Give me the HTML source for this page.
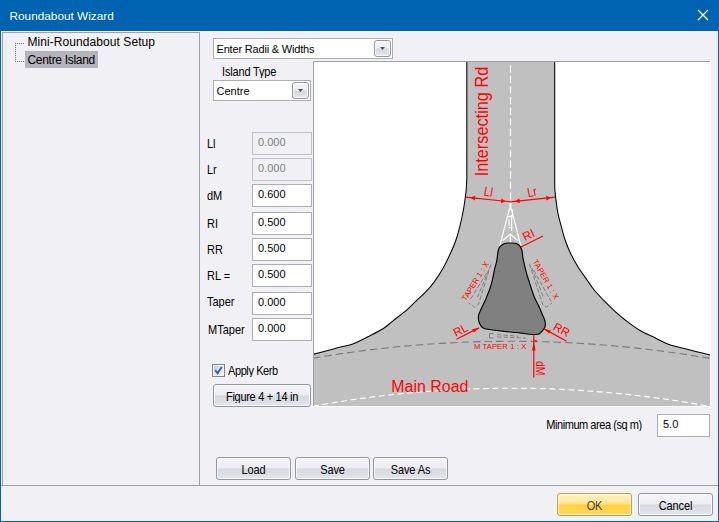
<!DOCTYPE html>
<html><head><meta charset="utf-8">
<style>
html,body{margin:0;padding:0;}
body{width:719px;height:522px;overflow:hidden;background:#f0f0f5;font-family:"Liberation Sans",sans-serif;font-size:11px;color:#000;position:relative;}
.abs{position:absolute;}
#title{left:0;top:0;width:719px;height:31px;background:#0063b1;}
#title span{position:absolute;left:9.5px;top:9px;font-size:11.8px;color:#fff;white-space:nowrap;}
#bl{left:0;top:31px;width:1px;height:491px;background:#0063b1;}
#br{left:718px;top:31px;width:1px;height:491px;background:#0063b1;}
#bb{left:0;top:521px;width:719px;height:1px;background:#0063b1;}
#tree{left:2px;top:32px;width:196px;height:453px;border:1px solid #a0a0a8;border-bottom:none;}
#sep{left:1px;top:485px;width:717px;height:1px;background:#a0a0a8;}
.t{position:absolute;white-space:nowrap;line-height:1;transform:scaleY(1.08);transform-origin:0 0;}
#tr1,#tr2{transform:none;}
.inp{position:absolute;background:#fff;border:1px solid #abadb3;box-sizing:border-box;}
.inp.dis{background:#f0f0f5;border-color:#c0c0c8;}
.inp span{position:absolute;left:5px;top:4px;font-size:11px;line-height:1;white-space:nowrap;}
.inp.dis span{color:#808080;}
.btn{position:absolute;box-sizing:border-box;border:1px solid #9097a0;border-radius:3px;background:linear-gradient(#f5f5f9 0%,#ececf1 48%,#d5d8df 52%,#e4e6eb 100%);box-shadow:inset 0 0 0 1px rgba(255,255,255,.75);text-align:center;font-size:11px;}
.btn span{position:absolute;left:0;right:0;top:5.6px;line-height:1;letter-spacing:-0.1px;transform:scaleY(1.08);transform-origin:0 0;}
</style></head><body>
<div id="title" class="abs"><span>Roundabout Wizard</span>
<svg class="abs" style="left:697px;top:9px" width="12" height="12"><path d="M1 1 L11 11 M11 1 L1 11" stroke="#fff" stroke-width="1.3" fill="none"/></svg>
</div>
<div id="bl" class="abs"></div><div id="br" class="abs"></div><div id="bb" class="abs"></div>
<div id="tree" class="abs"></div>
<div id="sep" class="abs"></div>

<!-- tree -->
<svg class="abs" style="left:14px;top:40px" width="12" height="24" shape-rendering="crispEdges"><path d="M1 3.5 H10 M1.5 3 V22 M1 21.5 H10" stroke="#707078" stroke-width="1" stroke-dasharray="1 1" fill="none"/></svg>
<div class="abs" style="left:25px;top:51px;width:73px;height:17px;background:#b4b4bc;"></div>
<div class="t" id="tr1" style="left:27.5px;top:36px;font-size:12px;letter-spacing:0.07px;">Mini-Roundabout Setup</div>
<div class="t" id="tr2" style="left:27.5px;top:54px;font-size:12px;letter-spacing:-0.3px;">Centre Island</div>

<!-- combo 1 -->
<div class="inp" style="left:213px;top:38px;width:180px;height:21px;"><span id="c1" style="left:2.5px;top:5px;letter-spacing:-0.18px;">Enter Radii &amp; Widths</span></div>
<div class="btn" style="left:374px;top:40px;width:17px;height:17px;"></div>
<svg class="abs" style="left:380px;top:47px" width="5" height="3"><path d="M0 0 H5 L2.5 3 Z" fill="#505058"/></svg>
<div class="t" id="it" style="left:222px;top:66px;font-size:11px;letter-spacing:-0.17px;">Island Type</div>
<!-- combo 2 -->
<div class="inp" style="left:213px;top:80px;width:98px;height:21px;"><span id="c2" style="left:2.5px;top:5px;">Centre</span></div>
<div class="btn" style="left:292px;top:82px;width:17px;height:17px;"></div>
<svg class="abs" style="left:298px;top:89px" width="5" height="3"><path d="M0 0 H5 L2.5 3 Z" fill="#505058"/></svg>

<!-- labels + inputs -->
<div class="t" style="left:207px;top:138px;">Ll</div>
<div class="t" style="left:207px;top:164px;">Lr</div>
<div class="t" style="left:207px;top:190px;">dM</div>
<div class="t" style="left:207px;top:218px;">RI</div>
<div class="t" style="left:207px;top:244px;">RR</div>
<div class="t" style="left:207px;top:270px;">RL =</div>
<div class="t" style="left:207px;top:296px;">Taper</div>
<div class="t" style="left:208px;top:324px;">MTaper</div>
<div class="inp dis" style="left:252px;top:132px;width:60px;height:23px;"><span>0.000</span></div>
<div class="inp dis" style="left:252px;top:158px;width:60px;height:23px;"><span>0.000</span></div>
<div class="inp" style="left:252px;top:184px;width:60px;height:23px;"><span>0.600</span></div>
<div class="inp" style="left:252px;top:212px;width:60px;height:23px;"><span>0.500</span></div>
<div class="inp" style="left:252px;top:238px;width:60px;height:23px;"><span>0.500</span></div>
<div class="inp" style="left:252px;top:264px;width:60px;height:23px;"><span>0.500</span></div>
<div class="inp" style="left:252px;top:292px;width:60px;height:23px;"><span>0.000</span></div>
<div class="inp" style="left:252px;top:318px;width:60px;height:23px;"><span>0.000</span></div>

<!-- checkbox -->
<div class="abs" style="left:212px;top:364px;width:13px;height:13px;box-sizing:border-box;border:1px solid #848488;background:#f4f4f6;"></div>
<div class="abs" style="left:214px;top:366px;width:9px;height:9px;background:linear-gradient(135deg,#c2cad8,#e6e9ef 60%,#f2f3f6);"></div>
<svg class="abs" style="left:214px;top:366px" width="9" height="9"><path d="M1.2 4.2 L3.6 7.2 L7.8 1" stroke="#3f68a0" stroke-width="2" fill="none"/></svg>
<div class="t" style="left:228px;top:365px;letter-spacing:-0.4px;">Apply Kerb</div>
<div class="btn" style="left:213px;top:384px;width:98px;height:23px;"><span style="letter-spacing:-0.3px">Figure 4 + 14 in</span></div>

<!-- diagram -->
<svg class="abs" id="dia" style="left:313px;top:61px" width="398" height="346" viewBox="313 61 398 346">
<rect x="313" y="61" width="398" height="346" fill="#fff"/>
<path d="M466.8 61.0 L466.8 178.0C466.7 180.0 466.4 186.8 466.2 190.0 C465.9 193.2 465.8 193.9 465.3 197.4 C464.8 200.9 464.1 206.3 463.2 211.0 C462.3 215.7 461.2 220.9 460.0 225.8 C458.8 230.7 457.4 235.9 455.8 240.5 C454.2 245.1 452.6 248.6 450.5 253.2 C448.4 257.8 446.0 263.0 443.2 267.9 C440.4 272.8 436.6 278.6 433.7 282.6 C430.8 286.6 428.4 289.1 425.5 292.1 C422.6 295.1 419.5 297.8 416.3 300.8 C413.1 303.8 410.2 307.0 406.3 310.3 C402.4 313.6 396.9 317.7 393.0 320.8 C389.1 323.9 387.2 326.1 383.0 328.7 C378.8 331.3 372.4 334.4 368.0 336.7 C363.6 339.0 359.4 341.1 356.3 342.5 C353.2 343.9 352.5 344.2 349.7 345.0 C346.9 345.8 343.0 346.4 339.7 347.2 C336.4 348.0 334.1 348.8 329.7 350.0 C325.2 351.2 315.8 353.7 313.0 354.4 L313 407 L711 407 L711.0 355.2C708.6 354.6 701.3 352.8 696.7 351.7 C692.1 350.6 688.0 349.6 683.3 348.3 C678.6 347.1 673.0 345.9 668.3 344.2 C663.6 342.4 659.7 340.1 655.0 337.8 C650.3 335.5 644.9 333.4 640.0 330.5 C635.1 327.6 630.0 323.7 625.8 320.5 C621.6 317.3 618.5 314.4 615.0 311.3 C611.5 308.2 608.5 305.2 605.0 301.7 C601.5 298.1 597.1 293.5 594.2 290.0 C591.3 286.5 590.1 284.4 587.4 280.5 C584.7 276.6 580.7 271.4 577.9 266.8 C575.1 262.2 572.6 257.6 570.5 253.2 C568.4 248.8 566.9 245.1 565.3 240.5 C563.7 235.9 562.3 230.4 561.1 225.8 C559.9 221.2 558.8 217.8 557.9 213.2 C557.0 208.6 556.3 202.3 555.8 198.4 C555.3 194.5 555.1 193.1 554.9 190.0 C554.7 186.9 554.7 181.7 554.7 180.0 L554.7 61.0 Z" fill="#c0c0c0"/>
<path d="M466.8 61.0 L466.8 178.0C466.7 180.0 466.4 186.8 466.2 190.0 C465.9 193.2 465.8 193.9 465.3 197.4 C464.8 200.9 464.1 206.3 463.2 211.0 C462.3 215.7 461.2 220.9 460.0 225.8 C458.8 230.7 457.4 235.9 455.8 240.5 C454.2 245.1 452.6 248.6 450.5 253.2 C448.4 257.8 446.0 263.0 443.2 267.9 C440.4 272.8 436.6 278.6 433.7 282.6 C430.8 286.6 428.4 289.1 425.5 292.1 C422.6 295.1 419.5 297.8 416.3 300.8 C413.1 303.8 410.2 307.0 406.3 310.3 C402.4 313.6 396.9 317.7 393.0 320.8 C389.1 323.9 387.2 326.1 383.0 328.7 C378.8 331.3 372.4 334.4 368.0 336.7 C363.6 339.0 359.4 341.1 356.3 342.5 C353.2 343.9 352.5 344.2 349.7 345.0 C346.9 345.8 343.0 346.4 339.7 347.2 C336.4 348.0 334.1 348.8 329.7 350.0 C325.2 351.2 315.8 353.7 313.0 354.4" fill="none" stroke="#000" stroke-width="1.05"/>
<path d="M554.7 61.0 L554.7 180.0C554.7 181.7 554.7 186.9 554.9 190.0 C555.1 193.1 555.3 194.5 555.8 198.4 C556.3 202.3 557.0 208.6 557.9 213.2 C558.8 217.8 559.9 221.2 561.1 225.8 C562.3 230.4 563.7 235.9 565.3 240.5 C566.9 245.1 568.4 248.8 570.5 253.2 C572.6 257.6 575.1 262.2 577.9 266.8 C580.7 271.4 584.7 276.6 587.4 280.5 C590.1 284.4 591.3 286.5 594.2 290.0 C597.1 293.5 601.5 298.1 605.0 301.7 C608.5 305.2 611.5 308.2 615.0 311.3 C618.5 314.4 621.6 317.3 625.8 320.5 C630.0 323.7 635.1 327.6 640.0 330.5 C644.9 333.4 650.3 335.5 655.0 337.8 C659.7 340.1 663.6 342.4 668.3 344.2 C673.0 345.9 678.6 347.1 683.3 348.3 C688.0 349.6 692.1 350.6 696.7 351.7 C701.3 352.8 708.6 354.6 711.0 355.2" fill="none" stroke="#000" stroke-width="1.05"/>
<!-- main road gray dashed edge -->
<path d="M313 358.2 A1165 1165 0 0 1 711 358.6" fill="none" stroke="#787878" stroke-width="1.1" stroke-dasharray="7.5 4"/>
<!-- main road white dashed centre -->
<path d="M313 406.2 A1100 1100 0 0 1 711 406.6" fill="none" stroke="#fff" stroke-width="1.1" stroke-dasharray="6 3.5"/>
<!-- intersecting centre dashed -->
<path d="M510.5 65.2 V201" fill="none" stroke="#fff" stroke-width="1.2" stroke-dasharray="7.2 3.4"/>
<!-- white nose hatch -->
<g fill="none" stroke="#fff" stroke-width="1.1">
<path d="M510.4 200.5 V209.5" stroke-width="2"/>
<path d="M509.4 209 L499.7 246 M511.4 209 L520.8 246"/>
<path d="M510.6 209.8 H512.4 V215.6 H510.6"/>
<path d="M507.6 216.6 H512.6 M508.6 227.6 H512.6"/>
<path d="M511.6 216 V231 M509 219 V226"/>
<path d="M502.8 240.5 L510.2 234 L517.6 240.5 M510.3 234 V243.5"/>
</g>
<!-- island -->
<path d="M505.9 243.2 C507.3 242.9 509.0 243.0 510.5 243.0 C512.0 243.0 513.8 242.9 515.1 243.2 C516.4 243.5 517.3 244.0 518.2 244.6 C519.1 245.2 519.7 245.6 520.3 246.6 C520.9 247.6 521.5 248.6 522.0 250.6 C522.5 252.6 522.4 255.2 523.1 258.7 C523.8 262.1 524.9 267.3 526.0 271.3 C527.1 275.3 528.5 279.5 529.5 282.8 C530.5 286.1 531.4 288.6 532.2 291.1 C533.1 293.6 533.5 295.3 534.6 297.8 C535.7 300.3 537.5 303.6 538.7 306.1 C539.9 308.6 540.7 310.6 541.6 312.8 C542.5 315.0 543.8 317.6 544.4 319.3 C545.0 321.1 545.2 322.1 545.3 323.3 C545.4 324.6 545.3 325.7 545.0 326.8 C544.7 327.9 544.0 328.7 543.3 329.7 C542.6 330.7 541.8 331.8 540.8 332.6 C539.8 333.4 539.4 334.0 537.5 334.3 C535.6 334.6 532.4 334.5 529.5 334.3 C526.6 334.1 522.9 333.2 520.0 332.9 C517.1 332.5 516.1 332.6 512.2 332.2 C508.3 331.8 501.2 331.0 496.8 330.5 C492.4 330.0 488.4 329.4 486.1 329.0 C483.9 328.6 484.1 328.4 483.3 327.9 C482.5 327.4 481.9 327.2 481.2 326.1 C480.5 325.1 479.3 323.4 478.9 321.6 C478.4 319.9 478.3 317.4 478.5 315.6 C478.7 313.8 479.2 313.4 480.3 310.9 C481.4 308.4 483.9 303.4 485.1 300.8 C486.3 298.2 486.6 297.0 487.4 295.0 C488.2 293.0 489.0 291.4 489.9 288.8 C490.8 286.2 491.8 282.5 492.5 279.4 C493.2 276.3 493.7 273.1 494.4 270.0 C495.1 266.9 496.1 264.2 496.7 261.0 C497.3 257.8 497.7 252.9 498.2 250.6 C498.7 248.3 498.9 248.2 499.6 247.2 C500.3 246.2 501.2 245.5 502.3 244.8 C503.4 244.1 504.5 243.5 505.9 243.2 Z" fill="#808080" stroke="#000" stroke-width="1.15"/>
<!-- taper dashed grey -->
<g fill="none" stroke="#808080" stroke-width="1" stroke-dasharray="4.5 2">
<path d="M490.9 264.4 L478.6 304 L475.1 307.5 L468.6 303"/>
<path d="M488.9 269.5 L477.6 297"/>
<path d="M486.6 273 L469.5 301"/>
<path d="M529.4 263.8 L543 305.2 L546.2 307.2 L552 303"/>
<path d="M531.8 268 L543.8 298"/>
<path d="M533.6 270 L551.2 301.5"/>
<path d="M493.5 333.5 H489.5 V338 H493.5" stroke-dasharray="none"/>
<path d="M497 334.5 L518 336.2 M497 337 L526 338"/>
</g>
<!-- red dims -->
<g fill="none" stroke="#ff0000" stroke-width="1.2">
<path d="M465.5 197.2 L510.5 201.8 L555 197.2"/>
<path d="M521 247 L543 236"/>
<path d="M456.5 339.2 L479 327.9"/>
<path d="M544.2 328.9 L566.6 341.2"/>
<path d="M533.8 334.3 V377.6"/>
<path d="M534 340.8 H537"/>
</g>
<g fill="#ff0000" stroke="none">
<path d="M470.5 197.7 L475.3 195.8 L474.8 200.6 Z"/>
<path d="M505.8 201.3 L501.0 203.2 L501.5 198.4 Z"/>
<path d="M515.0 201.3 L519.3 198.4 L519.8 203.2 Z"/>
<path d="M550.8 197.7 L546.5 200.6 L546.0 195.8 Z"/>
<path d="M479.3 327.8 L473.9 332.6 L472.2 329.3 Z"/>
<path d="M543.8 328.7 L550.8 330.5 L549.1 333.6 Z"/>
<path d="M533.8 342.0 L535.6 350.5 L532.0 350.5 Z"/>
</g>
<g fill="#ff0000" font-family="Liberation Sans, sans-serif">
<text transform="translate(487.8,176.3) rotate(-90)" font-size="18" textLength="109.5" lengthAdjust="spacingAndGlyphs">Intersecting Rd</text>
<text x="391.3" y="391.8" font-size="15.6" textLength="77.2" lengthAdjust="spacingAndGlyphs">Main Road</text>
<text transform="translate(483.3,195.3) rotate(11)" font-size="13" textLength="8.8" lengthAdjust="spacingAndGlyphs">Ll</text>
<text transform="translate(528.2,197.2) rotate(-11)" font-size="13" textLength="9.6" lengthAdjust="spacingAndGlyphs">Lr</text>
<text transform="translate(525,241.3) rotate(-26)" font-size="12">RI</text>
<text transform="translate(455.8,337) rotate(-26.8)" font-size="11.7">RL</text>
<text transform="translate(552.3,329.3) rotate(28.7)" font-size="11.7">RR</text>
<text transform="translate(535.6,361) rotate(90)" font-size="12.5" textLength="14.5" lengthAdjust="spacingAndGlyphs">dM</text>
<text transform="translate(465.9,301.6) rotate(-58.5)" font-size="7.8" textLength="44.5" lengthAdjust="spacing">TAPER 1 : X</text>
<text transform="translate(532.4,261.4) rotate(60)" font-size="7.8" textLength="44.5" lengthAdjust="spacing">TAPER 1 : X</text>
<text x="474" y="348.8" font-size="7.6" textLength="52.3" lengthAdjust="spacing">M TAPER 1 : X</text>
</g>
<path d="M313.5 406 V61.5 H710" fill="none" stroke="#a0a0a8"/>
<path d="M313 406.5 H710.5 V61" fill="none" stroke="#fff"/>
</svg>

<div class="t" style="left:546.3px;top:419px;letter-spacing:-0.45px;">Minimum area (sq m)</div>
<div class="inp" style="left:657px;top:414px;width:53px;height:23px;"><span>5.0</span></div>

<div class="btn" style="left:216px;top:457px;width:75px;height:23px;"><span>Load</span></div>
<div class="btn" style="left:295px;top:457px;width:75px;height:23px;"><span>Save</span></div>
<div class="btn" style="left:373px;top:457px;width:75px;height:23px;"><span>Save As</span></div>

<div class="btn" style="left:557px;top:493px;width:75px;height:23px;border-color:#c8a030;background:linear-gradient(#fff4c8 0%,#ffe48c 48%,#ffd040 52%,#ffd860 100%);"><span style="color:#404040">OK</span></div>
<div class="btn" style="left:638px;top:493px;width:75px;height:23px;"><span>Cancel</span></div>
</body></html>
